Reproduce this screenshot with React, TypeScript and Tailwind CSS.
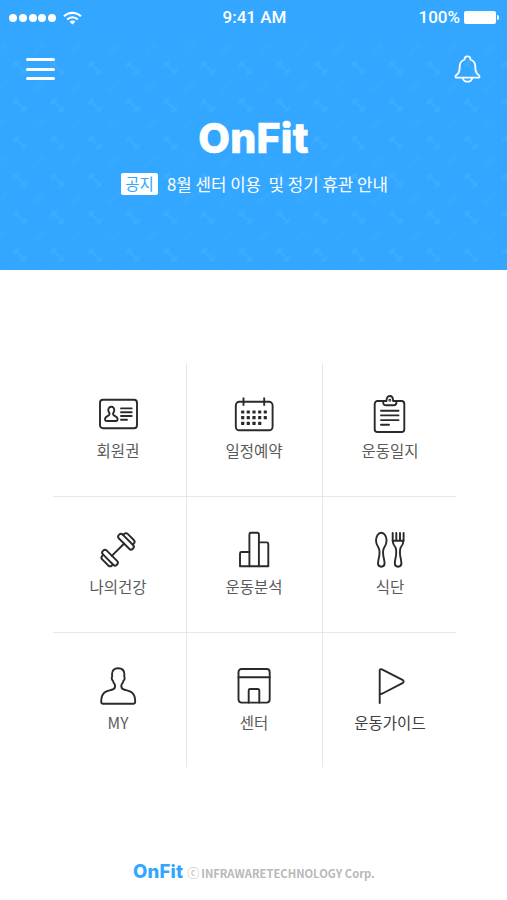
import React from 'react';
import { clsx } from 'clsx';

interface MenuItem {
  label: string;
  icon: React.ReactNode;
}

const calendarDots = [
  [8.7, 14.3, 20, 25.7, 31.3],
  [8.7, 14.3, 20, 25.7, 31.3],
  [8.7, 14.3, 20, 25.7],
];

function CardIcon() {
  return (
    <>
      <rect x="2" y="5.8" width="37" height="28.4" rx="3" />
      <path d="M13.3 12.8c-2 0-3.1 1.5-3 3.4.1 1.6.8 2.3 1.2 3 .3 1.6-.5 2.2-2 2.9-1.8.8-2.5 1.7-2.5 3.4 0 1 .5 1.5 1.4 1.5h9.8c.9 0 1.4-.5 1.4-1.5 0-1.7-.7-2.6-2.5-3.4-1.5-.7-2.3-1.3-2-2.9.4-.7 1.1-1.4 1.2-3 .1-1.9-1-3.4-3-3.4z" />
      <path d="M23 14.4h10.7M23 18.2h10.7M23 22h10.7M23 25.8h6" />
    </>
  );
}

function CalendarIcon() {
  return (
    <>
      <rect x="1.8" y="7.8" width="36.8" height="28.5" rx="3.5" />
      <path d="M9.5 3.5v8.2M30.2 3.5v8.2" strokeLinecap="butt" />
      <g fill="currentColor" stroke="none">
        {calendarDots.map((row, r) =>
          row.map((x) => <rect key={`${r}-${x}`} x={x - 1.6} y={16.4 + r * 5.7} width="3.2" height="3.2" rx="0.5" />)
        )}
      </g>
    </>
  );
}

function ClipboardIcon() {
  return (
    <>
      <path d="M13 7H7.5a2.8 2.8 0 0 0-2.8 2.8v25.4A2.8 2.8 0 0 0 7.5 38h24a2.8 2.8 0 0 0 2.8-2.8V9.8A2.8 2.8 0 0 0 31.5 7h-5" />
      <path d="M13.2 7h3.3c0-3.3 1.2-5 3.3-5s3.3 1.7 3.3 5h3.3v1.5c0 1.8-1 2.8-2.8 2.8H16c-1.8 0-2.8-1-2.8-2.8z" />
      <circle cx="19.8" cy="6.3" r="0.5" />
      <path d="M11 16.7h17.5M11 21.4h17.5M11 26.1h17.5M11 30.8h8" />
    </>
  );
}

function DumbbellIcon() {
  return (
    <g transform="translate(20 19.7) rotate(45)">
      <path d="M0-8.8V8.8" />
      <rect x="-9.8" y="-14" width="19.6" height="5.4" rx="2.5" />
      <rect x="-9.8" y="8.6" width="19.6" height="5.4" rx="2.5" />
      <path d="M-6.8-14v-1.5a2.5 2.5 0 0 1 2.5-2.5h8.6a2.5 2.5 0 0 1 2.5 2.5v1.5M-6.8 14v1.5a2.5 2.5 0 0 0 2.5 2.5h8.6a2.5 2.5 0 0 0 2.5-2.5V14" />
    </g>
  );
}

function ChartIcon() {
  return (
    <>
      <path d="M15.4 22H7.5A1.5 1.5 0 0 0 6 23.5v12.8h9.4" />
      <path d="M15.4 36.3V4.2a1.5 1.5 0 0 1 1.5-1.5h6.5a1.5 1.5 0 0 1 1.5 1.5v32.1z" />
      <path d="M24.9 12.4h7.9a1.5 1.5 0 0 1 1.5 1.5v22.4h-9.4" />
    </>
  );
}

function CutleryIcon() {
  return (
    <>
      <path d="M11.3 2.8C8.1 2.8 6 6.5 6 10.5c0 3.6 1.3 5.4 2.5 7.2 1.4 2.2 1.2 5 .8 8-.4 2.6-1.3 5.3-1.3 7.6 0 2.2 1.3 3.4 3.3 3.4s3.3-1.2 3.3-3.4c0-2.3-.9-5-1.3-7.6-.4-3-.6-5.8.8-8 1.2-1.8 2.5-3.6 2.5-7.2 0-4-2.1-7.7-5.3-7.7z" />
      <path d="M22.7 3v7.8h10.9V3M26.3 3v7.5M30 3v7.5" />
      <path d="M22.7 10.8c0 3 1.2 4.6 2.5 6.2 1.4 2 1.2 5 .8 8.7-.4 2.6-1.2 5.3-1.2 7.6 0 2.2 1.3 3.4 3.3 3.4s3.3-1.2 3.3-3.4c0-2.3-.8-5-1.2-7.6-.4-3.7-.6-6.7.8-8.7 1.3-1.6 2.4-3.2 2.4-6.2" />
    </>
  );
}

function PersonIcon() {
  return (
    <path d="M20.2 2.3C15.8 2.3 14 4.8 14 8.5c0 1 .2 1.500.2 2.200-.9.900-.5 3.300.7 4 .3 1.900 1 2.900 2 3.900.5 2.500.3 3.600-1.500 4.500C12.500 24.600 9 24.400 6.500 26.500 4 28.600 3.200 31.600 3.200 35.600c0 1.500.4 2.100 1.400 2.100h31.200c1 0 1.400-.6 1.400-2.100 0-4-.8-7-3.300-9.100-2.500-2.100-6-1.900-8.900-3.400-1.800-.9-2-2-1.500-4.500 1-1 1.700-2 2-3.900 1.200-.7 1.600-3.100.7-4 0-.7.2-1.200.2-2.200 0-3.700-1.800-6.200-6.200-6.200z" />
  );
}

function CenterIcon() {
  return (
    <>
      <rect x="4.5" y="3" width="31.2" height="33.6" rx="3" />
      <path d="M4.5 11.3h31.2M14.7 36.6V24.5a1.5 1.5 0 0 1 1.5-1.5h7.6a1.5 1.5 0 0 1 1.5 1.5v12.1" />
    </>
  );
}

function FlagIcon() {
  return <path d="M9.7 37V4.5c0-1.3 1-1.7 2.2-1.2l20.6 10.5c1.5.8 1.5 2.5 0 3.300L12.5 27.500l-2.600.8" />;
}

const menuItems: MenuItem[] = [
  { label: '회원권', icon: <CardIcon /> },
  { label: '일정예약', icon: <CalendarIcon /> },
  { label: '운동일지', icon: <ClipboardIcon /> },
  { label: '나의건강', icon: <DumbbellIcon /> },
  { label: '운동분석', icon: <ChartIcon /> },
  { label: '식단', icon: <CutleryIcon /> },
  { label: 'MY', icon: <PersonIcon /> },
  { label: '센터', icon: <CenterIcon /> },
  { label: '운동가이드', icon: <FlagIcon /> },
];

function StatusBar() {
  return (
    <div className="grid h-[35px] grid-cols-3 items-center pr-2 pl-[9px] font-[Roboto,sans-serif] text-[17px] font-medium">
      <div className="flex items-center">
        <div className="flex gap-[1.8px]">
          {[0, 1, 2, 3, 4].map((dot) => (
            <span key={dot} className="size-2 rounded-full bg-white" />
          ))}
        </div>
        <svg className="ml-[7px] h-[14px] w-[19px]" viewBox="0 0 19 14" fill="none" stroke="currentColor" strokeWidth="2.2">
          <path d="M1 5.3C5.8.6 13.2.6 18 5.3M4.2 8.5c3-3 7.6-3 10.6 0" />
          <path d="M6.6 10.7c1.7-1.6 4.1-1.6 5.8 0L9.5 13.6z" fill="currentColor" stroke="none" />
        </svg>
      </div>
      <span className="pl-px text-center">9:41 AM</span>
      <div className="flex items-center justify-end">
        <span>100%</span>
        <span className="ml-1 h-[13px] w-8 rounded-[2px] bg-white" />
        <span className="ml-px h-[5px] w-[2px] rounded-r-full bg-white" />
      </div>
    </div>
  );
}

function HeaderPattern() {
  return (
    <svg className="absolute inset-x-0 top-[38px] h-[232px] w-full" fill="none" stroke="#6cc0ff">
      <defs>
        <pattern id="dumbbells" x="1" y="11" width="37.6" height="37.4" patternUnits="userSpaceOnUse">
          <g transform="translate(19 19)" opacity="0.2" strokeWidth="1.8">
            <path d="M-4-4l8 8M-7-1l6-6M1 7l6-6M-6-4l2-2M4 6l2-2" />
          </g>
          <g opacity="0.06" strokeWidth="4">
            <path d="M-5 5L5-5M32.6 5l10-10M-5 42.4l10-10M32.6 42.4l10-10" />
          </g>
        </pattern>
      </defs>
      <rect width="100%" height="100%" fill="url(#dumbbells)" stroke="none" />
    </svg>
  );
}

function Header() {
  return (
    <header className="relative h-[270px] bg-[#33a7ff] text-white">
      <HeaderPattern />
      <div className="relative">
        <StatusBar />
        <div className="flex h-[68px] items-center justify-between px-[26px]">
          <button aria-label="메뉴" className="flex w-[29px] flex-col gap-[6.5px]">
            <span className="h-[3px] rounded-full bg-white" />
            <span className="h-[3px] rounded-full bg-white" />
            <span className="h-[3px] rounded-full bg-white" />
          </button>
          <button aria-label="알림">
            <svg className="h-7 w-[27px]" viewBox="0 0 27 28" fill="none" stroke="currentColor" strokeWidth="1.8" strokeLinejoin="round">
              <path d="M10.6 4.5c-.2-2 1-3.2 2.9-3.2s3.1 1.2 2.9 3.2c3.4 1.2 4.9 3.6 4.9 7 0 4.6.7 6.7 2.7 7.9 1.3.8 1.8 1.4 1.6 2.4-.1.6-.5.9-1.2.9H2.6c-.7 0-1.1-.3-1.2-.9-.2-1 .3-1.6 1.6-2.4 2-1.2 2.7-3.3 2.7-7.9 0-3.4 1.5-5.8 4.9-7z" />
              <path d="M8.7 22.9c.8 2.5 2.5 3.8 4.8 3.800s4-1.3 4.8-3.8" />
            </svg>
          </button>
        </div>
        <h1 className="mt-2.5 text-center font-[Inter,sans-serif] text-[41px] leading-[50px] font-extrabold tracking-[0.3px] [-webkit-text-stroke:0.7px_white]">
          OnFit
        </h1>
        <div className="mt-2.5 flex items-center pl-[121px]">
          <span className="flex h-[22px] w-[37px] items-center justify-center rounded-[2px] bg-white text-[15.5px] text-[#33a7ff]">공지</span>
          <span className="ml-[9px] text-[16.8px] leading-[22px] whitespace-pre">8월 센터 이용  및 정기 휴관 안내</span>
        </div>
      </div>
    </header>
  );
}

function MenuGrid() {
  return (
    <nav className="mt-[93px] ml-[53px] grid w-[403px] grid-cols-[134px_136px_133px] grid-rows-[134px_136px_134px]">
      {menuItems.map((item, index) => (
        <a
          key={item.label}
          className={clsx(
            'flex flex-col items-center border-[#e8e8e8] text-[#2a2a2a]',
            index % 3 === 0 && 'border-r pr-[3px]',
            index % 3 === 1 && 'border-r pr-px',
            index % 3 === 2 && 'pl-px',
            index < 6 && 'border-b',
            index < 3 ? 'pt-[31px]' : 'pt-[33px]'
          )}
        >
          <svg className="size-10" viewBox="0 0 40 40" fill="none" stroke="currentColor" strokeWidth="1.9" strokeLinecap="round" strokeLinejoin="round">
            {item.icon}
          </svg>
          <span
            className={clsx(
              'mt-[5px] text-[15.5px] leading-[22px] whitespace-nowrap',
              index === 8 ? 'text-[#404040]' : 'text-[#5a5a5a]'
            )}
          >
            {item.label}
          </span>
        </a>
      ))}
    </nav>
  );
}

export default function App() {
  return (
    <div className="h-[900px] w-[507px] overflow-hidden bg-white font-['Noto_Sans_CJK_KR',sans-serif]">
      <Header />
      <MenuGrid />
      <footer className="mt-[92px] flex items-center pl-[133px] text-[#b8b8b8]">
        <span className="font-[Inter,sans-serif] text-[18.5px] leading-6 font-extrabold tracking-[0.2px] text-[#33a7ff]">OnFit</span>
        <span className="mt-1 ml-1 text-[12px] leading-4">ⓒ</span>
        <span className="mt-1 ml-[2px] text-[11.2px] leading-4 font-bold">INFRAWARETECHNOLOGY Corp.</span>
      </footer>
    </div>
  );
}
